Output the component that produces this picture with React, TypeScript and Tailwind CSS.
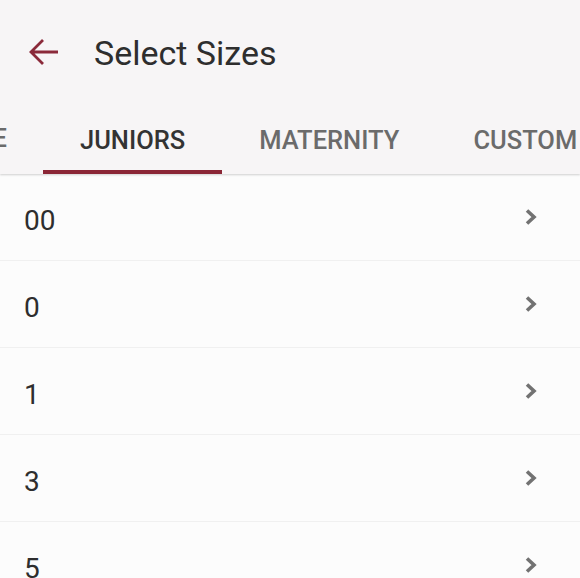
import React from "react";

const sizes = ["00", "0", "1", "3", "5", "7"];

function Chevron() {
  return (
    <svg width="14" height="18" viewBox="0 0 14 18" className="block">
      <polyline points="3,2.5 10,9 3,15.5" fill="none" stroke="#727272" strokeWidth="3.6" strokeLinecap="butt" strokeLinejoin="miter" />
    </svg>
  );
}

export default function App() {
  return (
    <div className="w-[580px] h-[578px] overflow-hidden bg-[#fcfcfc] flex flex-col" style={{ fontFamily: "Roboto, 'Noto Sans', sans-serif" }}>
      <div className="bg-[#f7f5f6] relative z-10 shadow-[0_1px_2px_rgba(0,0,0,0.18)]">
        <div className="h-[104px] flex items-center">
          <div className="w-[94px] flex items-center pl-[28px]">
            <svg width="32" height="30" viewBox="0 0 32 30" className="block">
              <path d="M30 15 H3 M15 3 L3 15 L15 27" fill="none" stroke="#8b2a3a" strokeWidth="2.8" strokeLinecap="butt" strokeLinejoin="miter" />
            </svg>
          </div>
          <div className="text-[34px] text-[#2e2e2e] leading-none pt-[2px]">Select Sizes</div>
        </div>
        <div className="h-[70px] flex whitespace-nowrap text-[25.5px] font-medium leading-none">
          <div className="w-[43px] shrink-0 overflow-hidden flex justify-end">
            <div className="pr-[36px] flex items-center text-[#6b6b6b] shrink-0">PETITE</div>
          </div>
          <div className="relative shrink-0 px-[37px] flex items-center text-[#333333]">
            <span className="pt-[3px]">JUNIORS</span>
            <div className="absolute left-0 right-0 bottom-0 h-[4px] bg-[#8b2636]" />
          </div>
          <div className="shrink-0 px-[37px] flex items-center text-[#6b6b6b]">
            <span className="pt-[3px]">MATERNITY</span>
          </div>
          <div className="shrink-0 px-[37px] flex items-center text-[#6b6b6b]">
            <span className="pt-[3px]">CUSTOM</span>
          </div>
        </div>
      </div>
      <div className="flex flex-col">
        {sizes.map((s) => (
          <div key={s} className="h-[87px] shrink-0 border-b border-[#f0f0f0] flex items-center justify-between pl-[24px] pr-[42px]">
            <span className="text-[28px] text-[#2e2e2e] leading-none pt-[8px]">{s}</span>
            <Chevron />
          </div>
        ))}
      </div>
    </div>
  );
}
